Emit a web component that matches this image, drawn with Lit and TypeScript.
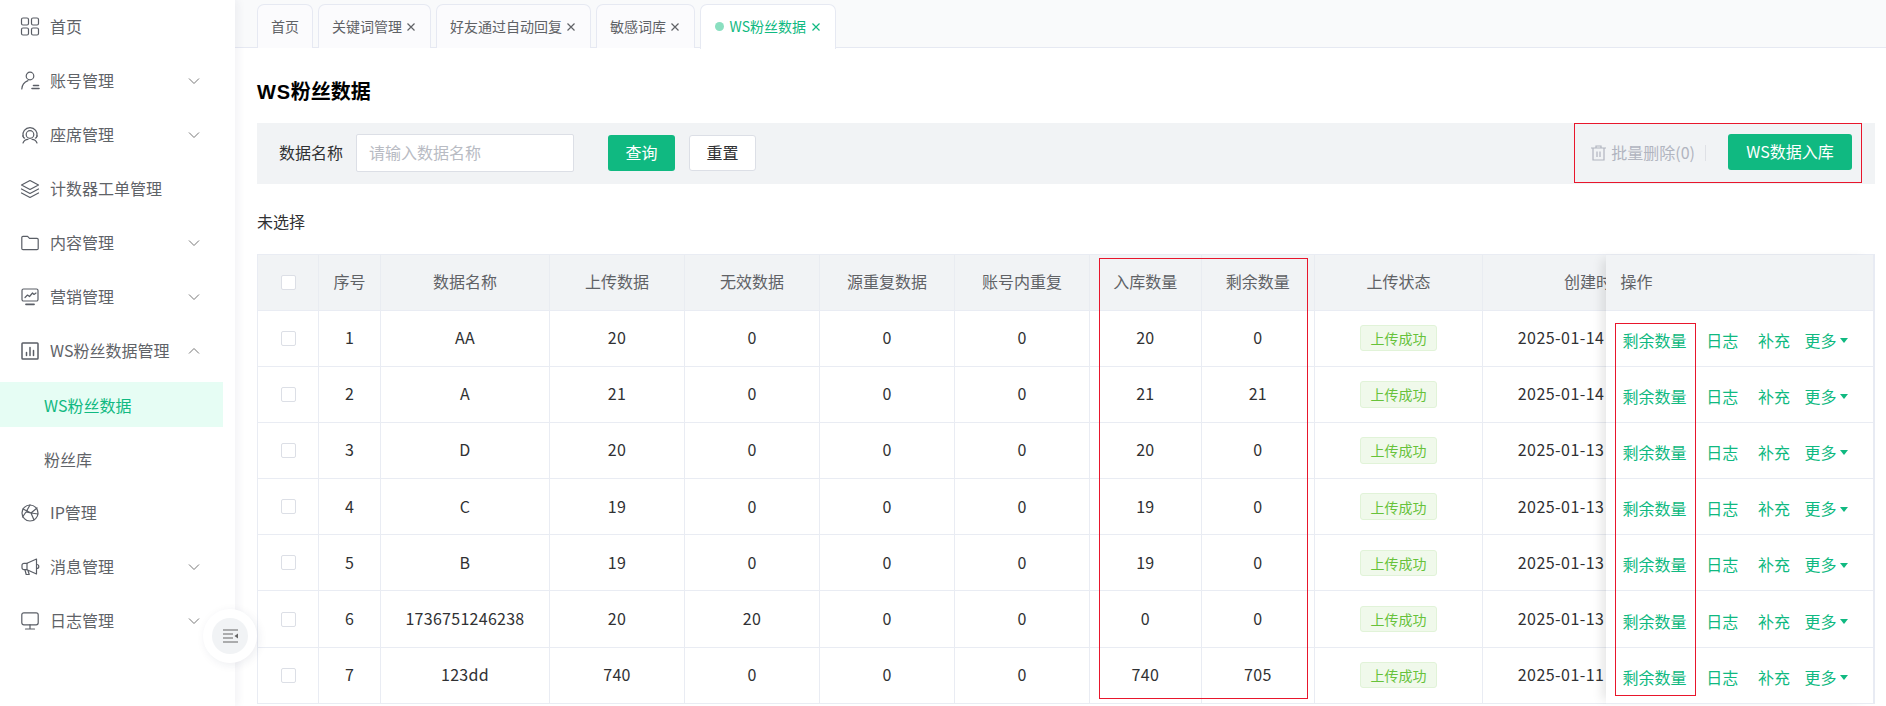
import { LitElement, html, css, svg } from "lit";
import { customElement } from "lit/decorators.js";

const S = (inner: unknown) => html`<svg class="ico" viewBox="0 0 20 20" fill="none" stroke="currentColor" stroke-width="1.2" stroke-linecap="round" stroke-linejoin="round">${inner}</svg>`;

const icons: Record<string, unknown> = {
  home: S(svg`<rect x="1.5" y="1" width="7" height="7" rx="1.5"/><rect x="11.5" y="1" width="7" height="7" rx="1.5"/><rect x="1.5" y="11" width="7" height="7" rx="1.5"/><rect x="11.5" y="11" width="7" height="7" rx="1.5"/>`),
  user: S(svg`<circle cx="10" cy="5" r="3.8"/><path d="M1.8 18c.2-4.2 2.4-7 6.2-8.4"/><path d="M13.5 14.5h5M12 17.5h7" stroke-width="1.6"/>`),
  seat: S(svg`<path d="M3 11.5a7.2 7.2 0 1 1 14 0"/><path d="M3 10.5c0 1.5.7 2.4 1.6 2.6M17 10.5c0 1.5-.7 2.4-1.6 2.6"/><circle cx="10" cy="9.5" r="3.8"/><path d="M3 18c1-2.5 3-3.7 5-3.7M17 18c-1-2.5-3-3.7-5-3.7"/>`),
  layers: S(svg`<path d="M10 1.5 18.5 6 10 10.5 1.5 6z"/><path d="M1.5 10 10 14.5 18.5 10"/><path d="M1.5 14 10 18.5 18.5 14"/>`),
  folder: S(svg`<path d="M1.8 4.5a1.2 1.2 0 0 1 1.2-1.2h4.6l1.9 2h7.5a1.2 1.2 0 0 1 1.2 1.2v9a1.2 1.2 0 0 1-1.2 1.2H3a1.2 1.2 0 0 1-1.2-1.2z"/>`),
  chart: S(svg`<path d="M2 11.5V3.5A1.5 1.5 0 0 1 3.5 2h13A1.5 1.5 0 0 1 18 3.5v9a1.5 1.5 0 0 1-1.5 1.5h-13A1.5 1.5 0 0 1 2 12.5z"/><path d="M5 10.5l2.5-2.5 2 1.5L12.500 6l1.500 1.500 2-1.500"/><path d="M6 17.3h8" stroke-width="1.8"/>`),
  bars: S(svg`<rect x="2" y="2" width="16" height="16" rx=".8" stroke-width="1.5"/><path d="M6.5 14.5v-3M10 14.5v-8M13.5 14.5v-5" stroke-width="1.5"/>`),
  ip: S(svg`<circle cx="10" cy="10" r="8"/><path d="M3 6l8 4 3 7M10 2 6 9l-3.5 5M6 9l5 1 6-5M11 10l7 1"/>`),
  msg: S(svg`<path d="M7 6.3 16.5 2v15l-9.5-4.3H4a2 2 0 0 1-2-2V8.3a2 2 0 0 1 2-2z"/><path d="M7 6.3v6.4"/><path d="M5 13l1.2 4.5h3L8 13.5"/><path d="M16.8 7.5a2 2 0 0 1 0 4"/>`),
  monitor: S(svg`<rect x="1.8" y="1.8" width="16.4" height="12" rx="2"/><path d="M10 13.8v4M5.5 18h9"/>`),
};

const menu = [
  { t: "首页", i: "home" },
  { t: "账号管理", i: "user", c: "d" },
  { t: "座席管理", i: "seat", c: "d" },
  { t: "计数器工单管理", i: "layers" },
  { t: "内容管理", i: "folder", c: "d" },
  { t: "营销管理", i: "chart", c: "d" },
  { t: "WS粉丝数据管理", i: "bars", c: "u" },
  { t: "WS粉丝数据", sub: true, active: true },
  { t: "粉丝库", sub: true },
  { t: "IP管理", i: "ip" },
  { t: "消息管理", i: "msg", c: "d" },
  { t: "日志管理", i: "monitor", c: "d" },
];

const tabs = [
  { t: "首页", home: true },
  { t: "关键词管理" },
  { t: "好友通过自动回复" },
  { t: "敏感词库" },
  { t: "WS粉丝数据", active: true },
];

const heads = ["序号", "数据名称", "上传数据", "无效数据", "源重复数据", "账号内重复", "入库数量", "剩余数量", "上传状态", "创建时间"];

const rows = [
  [1, "AA", 20, 0, 0, 0, 20, 0, "2025-01-14 16:20:35"],
  [2, "A", 21, 0, 0, 0, 21, 21, "2025-01-14 15:42:18"],
  [3, "D", 20, 0, 0, 0, 20, 0, "2025-01-13 18:11:02"],
  [4, "C", 19, 0, 0, 0, 19, 0, "2025-01-13 17:36:47"],
  [5, "B", 19, 0, 0, 0, 19, 0, "2025-01-13 17:21:09"],
  [6, "1736751246238", 20, 20, 0, 0, 0, 0, "2025-01-13 14:54:06"],
  [7, "123dd", 740, 0, 0, 0, 740, 705, "2025-01-11 11:28:53"],
];

@customElement("app-root")
export class AppRoot extends LitElement {
  static styles = css`
    :host {
      display: block;
      width: 100%;
      height: 706px;
      overflow: hidden;
      position: relative;
      background: #fff;
      font-family: "Noto Sans CJK SC", "Noto Sans", sans-serif;
      font-size: 16px;
      color: #303133;
    }
    .app { display: flex; height: 706px; }
    aside {
      width: 235px;
      flex: none;
      background: #fff;
      box-shadow: 3px 0 8px rgba(30, 40, 80, 0.06);
      position: relative;
      z-index: 2;
    }
    .mi {
      height: 54px;
      display: flex;
      align-items: center;
      padding-left: 20px;
      color: #5f6368;
      position: relative;
    }
    .mi > span { padding-bottom: 2px; }
    .ico { width: 20px; height: 20px; flex: none; color: #5a5e66; margin-right: 10px; }
    .chev { position: absolute; left: 188px; top: 23px; width: 12px; height: 8px; color: #777; }
    .sub { height: 54px; box-sizing: border-box; padding-bottom: 2px; display: flex; align-items: center; color: #5f6368; }
    .sub span { flex: none; width: 223px; height: 45px; line-height: 46px; padding-left: 44px; box-sizing: border-box; }
    .sub.on span { background: #e6fdf4; color: #10b981; }
    .collapse {
      position: absolute;
      left: 203px;
      top: 609px;
      width: 54px;
      height: 54px;
      border-radius: 50%;
      background: #fff;
      box-shadow: 2px 2px 10px rgba(30, 40, 80, 0.08);
      display: flex;
      align-items: center;
      justify-content: center;
    }
    .collapse div {
      width: 36px;
      height: 36px;
      border-radius: 50%;
      background: #f1f3f5;
      display: flex;
      align-items: center;
      justify-content: center;
    }
    .collapse svg { width: 15px; height: 14px; color: #666; }

    main { flex: 1; min-width: 0; display: flex; flex-direction: column; }
    .tabs {
      height: 48px;
      flex: none;
      box-sizing: border-box;
      background: #f9fafb;
      border-bottom: 1px solid #e6e9f2;
      padding: 4px 0 0 22px;
      display: flex;
      gap: 5px;
    }
    .tab {
      height: 44px;
      box-sizing: border-box;
      padding: 0 13px;
      border: 1px solid #e6e9f2;
      border-bottom: none;
      border-radius: 7px 7px 0 0;
      background: #fbfbfd;
      font-size: 14px;
      color: #606266;
      display: flex;
      align-items: center;
    }
    .tab span { padding-bottom: 2px; }
    .tab .dot { padding: 0; }
    .tab svg { width: 10px; height: 10px; margin: 0 1.5px 0 3.5px; color: #606266; }
    .tab.on { background: #fff; color: #10b981; height: 45px; position: relative; z-index: 1; }
    .tab.on svg { color: #10b981; margin-left: 4.5px; }
    .dot { width: 9px; height: 9px; border-radius: 50%; background: #8adfc0; margin-right: 5.5px; margin-left: 1px; margin-top: -1px; }

    .content { flex: 1; min-height: 0; padding: 0 11px 0 22px; }
    h1 { margin: 29px 0 0; height: 28px; font-size: 20px; line-height: 28px; font-weight: 700; color: #000; }
    h1 span { font-family: "Liberation Sans", sans-serif; letter-spacing: 0.8px; }
    .filter {
      margin-top: 18px;
      height: 61px;
      box-sizing: border-box;
      padding: 0 23px 1px 22px;
      background: #f1f3f5;
      display: flex;
      align-items: center;
    }
    .filter label { color: #303133; margin-right: 13px; padding-bottom: 2px; }
    .input {
      width: 218px;
      height: 38px;
      box-sizing: border-box;
      background: #fff;
      border: 1px solid #dcdfe6;
      border-radius: 2px;
      padding: 0 12px 2px;
      display: flex;
      align-items: center;
      color: #b8bbc3;
      margin-right: 34px;
    }
    .btn {
      height: 36px;
      box-sizing: border-box;
      border-radius: 3px;
      padding-bottom: 2px;
      display: flex;
      align-items: center;
      justify-content: center;
    }
    .primary { background: #10b981; color: #fff; }
    .plain { background: #fff; border: 1px solid #dcdfe6; color: #303133; }
    .q { width: 67px; margin-right: 14px; }
    .r { width: 67px; }
    .bulk { margin-left: auto; display: flex; align-items: center; color: #b1b5c0; }
    .bulk > span { padding-bottom: 2px; }
    .bulk svg { width: 15px; height: 16px; margin-right: 5px; }
    .bulk i { display: block; width: 1px; height: 16px; background: #dfe1e6; margin: -1px 22px 0 10px; }
    .wsbtn { width: 124px; margin-top: -2px; }
    .sel { margin-top: 26px; padding-bottom: 1px; line-height: 22px; font-size: 16px; color: #303133; }

    .table {
      margin-top: 21px;
      display: flex;
      border-top: 1px solid #e9ecf3;
      border-left: 1px solid #e9ecf3;
      border-right: 2px solid #e8ebf3;
    }
    .scroll { flex: 1; min-width: 0; overflow: hidden; }
    .row {
      display: grid;
      grid-template-columns: 61px 62px 169px 135px 135px 135px 135px 111.7px 113.3px 168px 227px;
      width: 1452px;
      height: 56.2px;
      box-sizing: border-box;
      border-bottom: 1px solid #e9ecf3;
    }
    .row.head { height: 55.5px; background: #f1f3f5; color: #606266; }
    .cell {
      border-right: 1px solid #e9ecf3;
      display: flex;
      align-items: center;
      justify-content: center;
      white-space: nowrap;
      overflow: hidden;
    }
    .cell.t { padding-bottom: 2px; }
    .row:not(.head) .cell.t { letter-spacing: 0.28px; }
    .row.head .cell { border-right-color: #e9ecf1; }
    .row:not(.head) .cell.date { letter-spacing: 0.45px; }
    .cb {
      width: 15px;
      height: 15px;
      box-sizing: border-box;
      border: 1px solid #dcdfe6;
      border-radius: 2px;
      background: #fff;
    }
    .tag {
      width: 76.5px;
      height: 26.5px;
      box-sizing: border-box;
      border: 1px solid #e1f3d8;
      background: #f0f9eb;
      color: #67c23a;
      font-size: 14px;
      border-radius: 3px;
      display: flex;
      align-items: center;
      justify-content: center;
    }
    .fixed {
      width: 267px;
      flex: none;
      background: #fff;
      box-shadow: -8px 0 10px -4px rgba(0, 0, 0, 0.1);
      position: relative;
    }
    .fixed .row { width: 100%; display: flex; align-items: center; padding-left: 16.5px; color: #10b981; gap: 19.7px; }
    .fixed .row.head { color: #606266; padding-left: 14.5px; padding-bottom: 2px; }
    .fixed .row:not(.head) span { padding-top: 3px; }
    .more { display: flex; align-items: center; margin-left: -5.1px; }
    .more b { display: block; width: 0; height: 0; border: 4.5px solid transparent; border-top: 5px solid #10b981; border-bottom: none; margin: 2px 0 0 3px; }

    .redbox { position: absolute; border: 1px solid #e8162c; box-sizing: border-box; pointer-events: none; z-index: 3; }
    .r1 { left: 1574px; top: 123px; width: 288px; height: 60px; }
    .r2 { left: 1099px; top: 258px; width: 209px; height: 441px; }
    .r3 { left: 1615px; top: 323px; width: 81px; height: 373px; }
  `;

  render() {
    const x = html`<svg viewBox="0 0 10 10" fill="none" stroke="currentColor" stroke-width="1.2"><path d="M1.5 1.5l7 7M8.5 1.5l-7 7"/></svg>`;
    return html`
      <div class="app">
        <aside>
          ${menu.map((m) =>
            m.sub
              ? html`<div class="sub ${m.active ? "on" : ""}"><span>${m.t}</span></div>`
              : html`<div class="mi">
                  ${icons[m.i as string]}<span>${m.t}</span>
                  ${m.c
                    ? html`<svg class="chev" viewBox="0 0 12 8" fill="none" stroke="currentColor" stroke-width="1"><path d="${m.c === "d" ? "M1 1.5l5 5 5-5" : "M1 6.5l5-5 5 5"}"/></svg>`
                    : ""}
                </div>`
          )}
          <div class="collapse"><div>
            <svg viewBox="0 0 15 14" fill="none" stroke="currentColor" stroke-width="1.2"><path d="M0 1h15M0 5h10M0 9h10M0 13h15"/><path d="M15 4.5v5l-3.5-2.5z" fill="currentColor" stroke="none"/></svg>
          </div></div>
        </aside>
        <main>
          <div class="tabs">
            ${tabs.map(
              (t) => html`<div class="tab ${t.active ? "on" : ""}">
                ${t.active ? html`<span class="dot"></span>` : ""}<span>${t.t}</span>${t.home ? "" : x}
              </div>`
            )}
          </div>
          <div class="content">
            <h1><span>WS</span>粉丝数据</h1>
            <div class="filter">
              <label>数据名称</label>
              <div class="input">请输入数据名称</div>
              <div class="btn primary q">查询</div>
              <div class="btn plain r">重置</div>
              <div class="bulk">
                <svg viewBox="0 0 15 16" fill="none" stroke="currentColor" stroke-width="1.2"><path d="M0 3h15M5 3V1h5v2M2 3v12h11V3M6 6.5v5.5M9 6.5v5.5"/></svg>
                <span>批量删除(0)</span><i></i>
                <div class="btn primary wsbtn">WS数据入库</div>
              </div>
            </div>
            <div class="sel">未选择</div>
            <div class="table">
              <div class="scroll">
                <div class="row head">
                  <div class="cell"><span class="cb"></span></div>
                  ${heads.map((h) => html`<div class="cell t">${h}</div>`)}
                </div>
                ${rows.map(
                  (r) => html`<div class="row">
                    <div class="cell"><span class="cb"></span></div>
                    ${r.slice(0, 8).map((v) => html`<div class="cell t">${v}</div>`)}
                    <div class="cell"><span class="tag">上传成功</span></div>
                    <div class="cell t date">${r[8]}</div>
                  </div>`
                )}
              </div>
              <div class="fixed">
                <div class="row head"><span>操作</span></div>
                ${rows.map(
                  () => html`<div class="row">
                    <span>剩余数量</span><span>日志</span><span>补充</span>
                    <span class="more">更多<b></b></span>
                  </div>`
                )}
              </div>
            </div>
          </div>
        </main>
      </div>
      <div class="redbox r1"></div>
      <div class="redbox r2"></div>
      <div class="redbox r3"></div>
    `;
  }
}
